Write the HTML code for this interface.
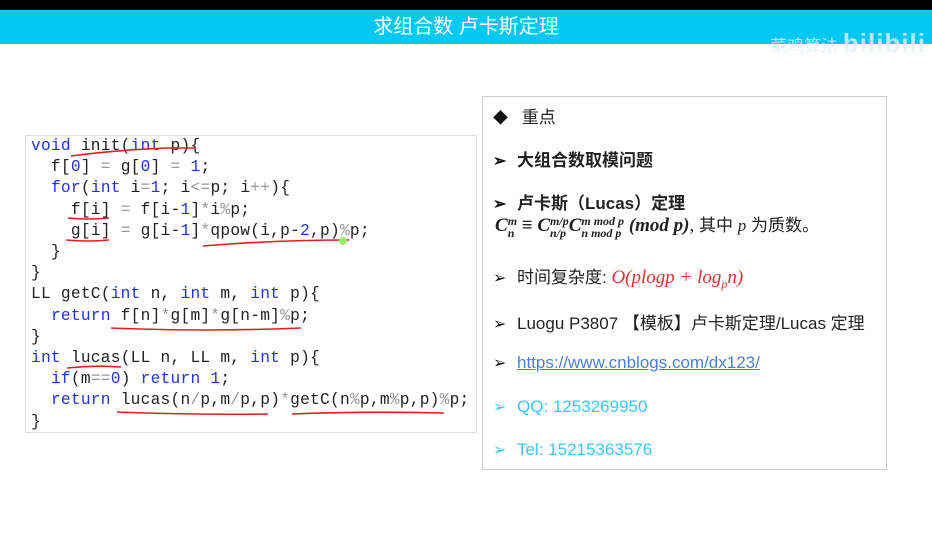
<!DOCTYPE html>
<html><head><meta charset="utf-8"><style>
*{margin:0;padding:0;box-sizing:border-box}
body{width:932px;height:538px;background:#fff;position:relative;overflow:hidden;font-family:"Liberation Sans","Noto Sans CJK SC",sans-serif}
.top{position:absolute;left:0;top:0;width:932px;height:10px;background:#000}
.bar{position:absolute;left:0;top:10px;width:932px;height:34px;background:#00c8f4;color:#fff;text-align:center;font-size:20px;line-height:34px}
.wm{position:absolute;right:6px;top:28px;color:rgba(230,240,245,.8);font-size:17px}
.code{position:absolute;left:25px;top:135px;width:452px;height:298px;border:1px solid #ddd}
.ln{position:absolute;left:5px;height:21px;line-height:21px;font-family:"Liberation Mono",monospace;font-size:16.2px;color:#222;white-space:pre;letter-spacing:0.25px}
.k{color:#2233dd}.n{color:#2233dd}.o{color:#999}
.box{position:absolute;left:482px;top:96px;width:405px;height:374px;border:1px solid #ccc}
.it{position:absolute;left:10px;font-size:17px;color:#222;white-space:nowrap}
.ar{display:inline-block;width:24px;font-size:16px;color:#111}
.b{font-weight:bold}
</style></head><body>
<div class="top"></div>
<div class="bar">求组合数 卢卡斯定理</div>
<div class="wm">菜鸡算法 <span style="font-size:26px;font-weight:bold;letter-spacing:1px">bilibili</span></div>
<div class="code">
<div class="ln" style="top:0px"><span class="k">void</span> init(<span class="k">int</span> p){</div>
<div class="ln" style="top:21.2px">  f[<span class="n">0</span>] <span class="o">=</span> g[<span class="n">0</span>] <span class="o">=</span> <span class="n">1</span>;</div>
<div class="ln" style="top:42.4px">  <span class="k">for</span>(<span class="k">int</span> i<span class="o">=</span><span class="n">1</span>; i<span class="o">&lt;=</span>p; i<span class="o">++</span>){</div>
<div class="ln" style="top:63.6px">    f[i] <span class="o">=</span> f[i-<span class="n">1</span>]<span class="o">*</span>i<span class="o">%</span>p;</div>
<div class="ln" style="top:84.8px">    g[i] <span class="o">=</span> g[i-<span class="n">1</span>]<span class="o">*</span>qpow(i,p-<span class="n">2</span>,p)<span class="o">%</span>p;</div>
<div class="ln" style="top:106px">  }</div>
<div class="ln" style="top:127.2px">}</div>
<div class="ln" style="top:148.4px">LL getC(<span class="k">int</span> n, <span class="k">int</span> m, <span class="k">int</span> p){</div>
<div class="ln" style="top:169.6px">  <span class="k">return</span> f[n]<span class="o">*</span>g[m]<span class="o">*</span>g[n-m]<span class="o">%</span>p;</div>
<div class="ln" style="top:190.8px">}</div>
<div class="ln" style="top:212px"><span class="k">int</span> lucas(LL n, LL m, <span class="k">int</span> p){</div>
<div class="ln" style="top:233.2px">  <span class="k">if</span>(m<span class="o">==</span><span class="n">0</span>) <span class="k">return</span> <span class="n">1</span>;</div>
<div class="ln" style="top:254.4px">  <span class="k">return</span> lucas(n<span class="o">/</span>p,m<span class="o">/</span>p,p)<span class="o">*</span>getC(n<span class="o">%</span>p,m<span class="o">%</span>p,p)<span class="o">%</span>p;</div>
<div class="ln" style="top:275.6px">}</div>
<svg width="452" height="300" style="position:absolute;left:0;top:0" fill="none" stroke="#e02020" stroke-width="1.6">
<path d="M45 20 Q90 14 140 12 L170 12"/>
<path d="M42 82 Q62 84 83 82"/>
<path d="M40 104 Q62 106 83 104"/>
<path d="M177 110 Q250 104 323 104"/>
<path d="M85 192 Q180 196 275 192"/>
<path d="M41 232 Q68 229 95 231"/>
<path d="M91 276 Q170 279 242 278"/>
<path d="M266 278 Q340 275 418 277"/>
</svg>
<div style="position:absolute;left:313px;top:101px;width:8px;height:8px;border-radius:50%;background:#9e6"></div>
</div>
<div class="box">
<div class="it" style="top:6px"><span class="ar" style="font-size:15px">◆</span> 重点</div>
<div class="it b" style="top:49px"><span class="ar">➢</span>大组合数取模问题</div>
<div class="it b" style="top:92px"><span class="ar">➢</span>卢卡斯（Lucas）定理</div>
<div class="it" style="top:114px;left:12px;font-family:'Liberation Serif','Noto Serif CJK SC',serif;font-size:19px"><b><i>C<span style="display:inline-block;vertical-align:middle;font-size:12px;line-height:12px;text-align:left"><span style="display:block">m</span><span style="display:block">n</span></span> ≡ C<span style="display:inline-block;vertical-align:middle;font-size:12px;line-height:12px"><span style="display:block">m/p</span><span style="display:block">n/p</span></span>C<span style="display:inline-block;vertical-align:middle;font-size:12px;line-height:12px"><span style="display:block">m mod p</span><span style="display:block">n mod p</span></span> (mod p)</i></b>, <span style="font-family:'Liberation Sans','Noto Sans CJK SC',sans-serif;font-size:17px">其中 <i style="font-family:'Liberation Serif',serif">p</i> 为质数。</span></div>
<div class="it" style="top:166px"><span class="ar">➢</span>时间复杂度: <i style="color:#e03030;font-family:'Liberation Serif',serif;font-size:19px">O(plogp + log<sub style="font-size:12px">p</sub>n)</i></div>
<div class="it" style="top:212px"><span class="ar">➢</span>Luogu P3807 【模板】卢卡斯定理/Lucas 定理</div>
<div class="it" style="top:256px"><span class="ar">➢</span><span style="color:#4a7ed8;text-decoration:underline">https://www.cnblogs.com/dx123/</span></div>
<div class="it" style="top:300px;color:#3cc8f0"><span class="ar" style="color:#3cc8f0">➢</span>QQ: 1253269950</div>
<div class="it" style="top:343px;color:#3cc8f0"><span class="ar" style="color:#3cc8f0">➢</span>Tel: 15215363576</div>
</div>
</body></html>
